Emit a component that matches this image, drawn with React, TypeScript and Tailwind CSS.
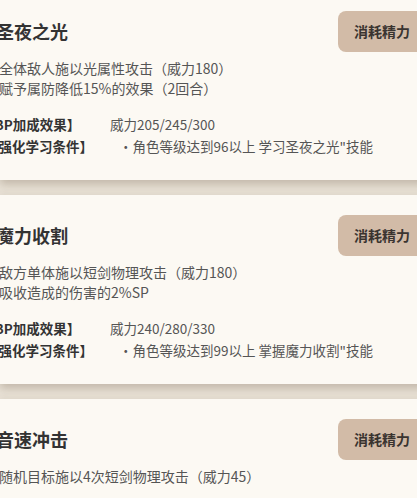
const skills = [
  {
    name: "圣夜之光",
    desc: ["全体敌人施以光属性攻击（威力180）", "赋予属防降低15%的效果（2回合）"],
    bp: "威力205/245/300",
    cond: '・角色等级达到96以上 学习圣夜之光"技能',
  },
  {
    name: "魔力收割",
    desc: ["敌方单体施以短剑物理攻击（威力180）", "吸收造成的伤害的2%SP"],
    bp: "威力240/280/330",
    cond: '・角色等级达到99以上 掌握魔力收割"技能',
  },
  {
    name: "音速冲击",
    desc: ["随机目标施以4次短剑物理攻击（威力45）"],
    bp: "威力60/70/80",
    cond: '・角色等级达到90以上 学习音速冲击"技能',
  },
];

function SkillCard({ skill }: { skill: (typeof skills)[number] }) {
  return (
    <div className="w-[426px] shrink-0 bg-[#fcf9f3] pt-[20px] pb-[23px] shadow-[0_4px_9px_rgba(90,70,45,0.28)]">
      <div className="flex items-center justify-between">
        <h2 className="-ml-[4px] text-[18px] font-bold leading-[41px] text-[#333333]">
          {skill.name}
        </h2>
        <button className="h-[41px] w-[88px] rounded-[8px] bg-[#d2bba7] text-[14px] font-bold text-[#3a3430]">
          消耗精力
        </button>
      </div>
      <div className="mt-[6px] -ml-px text-[14px] leading-[20px] text-[#555555]">
        {skill.desc.map((line) => (
          <p key={line}>{line}</p>
        ))}
      </div>
      <div className="mt-[15px] -ml-[15px] grid grid-cols-[125px_1fr] text-[13.5px] leading-[22px]">
        <span className="-ml-[4px] font-bold text-[#333333]">【BP加成效果】</span>
        <span className="text-[#555555]">{skill.bp}</span>
        <span className="font-bold text-[#333333]">【强化学习条件】</span>
        <span className="pl-[9px] text-[#555555]">{skill.cond}</span>
      </div>
    </div>
  );
}

export default function App() {
  return (
    <div className="h-[498px] w-full overflow-hidden bg-[#e8e1d5] font-['Noto_Sans_CJK_SC','Noto_Sans',sans-serif]">
      <div className="-mt-[9px] flex flex-col gap-[15px]">
        {skills.map((s) => (
          <SkillCard key={s.name} skill={s} />
        ))}
      </div>
    </div>
  );
}
